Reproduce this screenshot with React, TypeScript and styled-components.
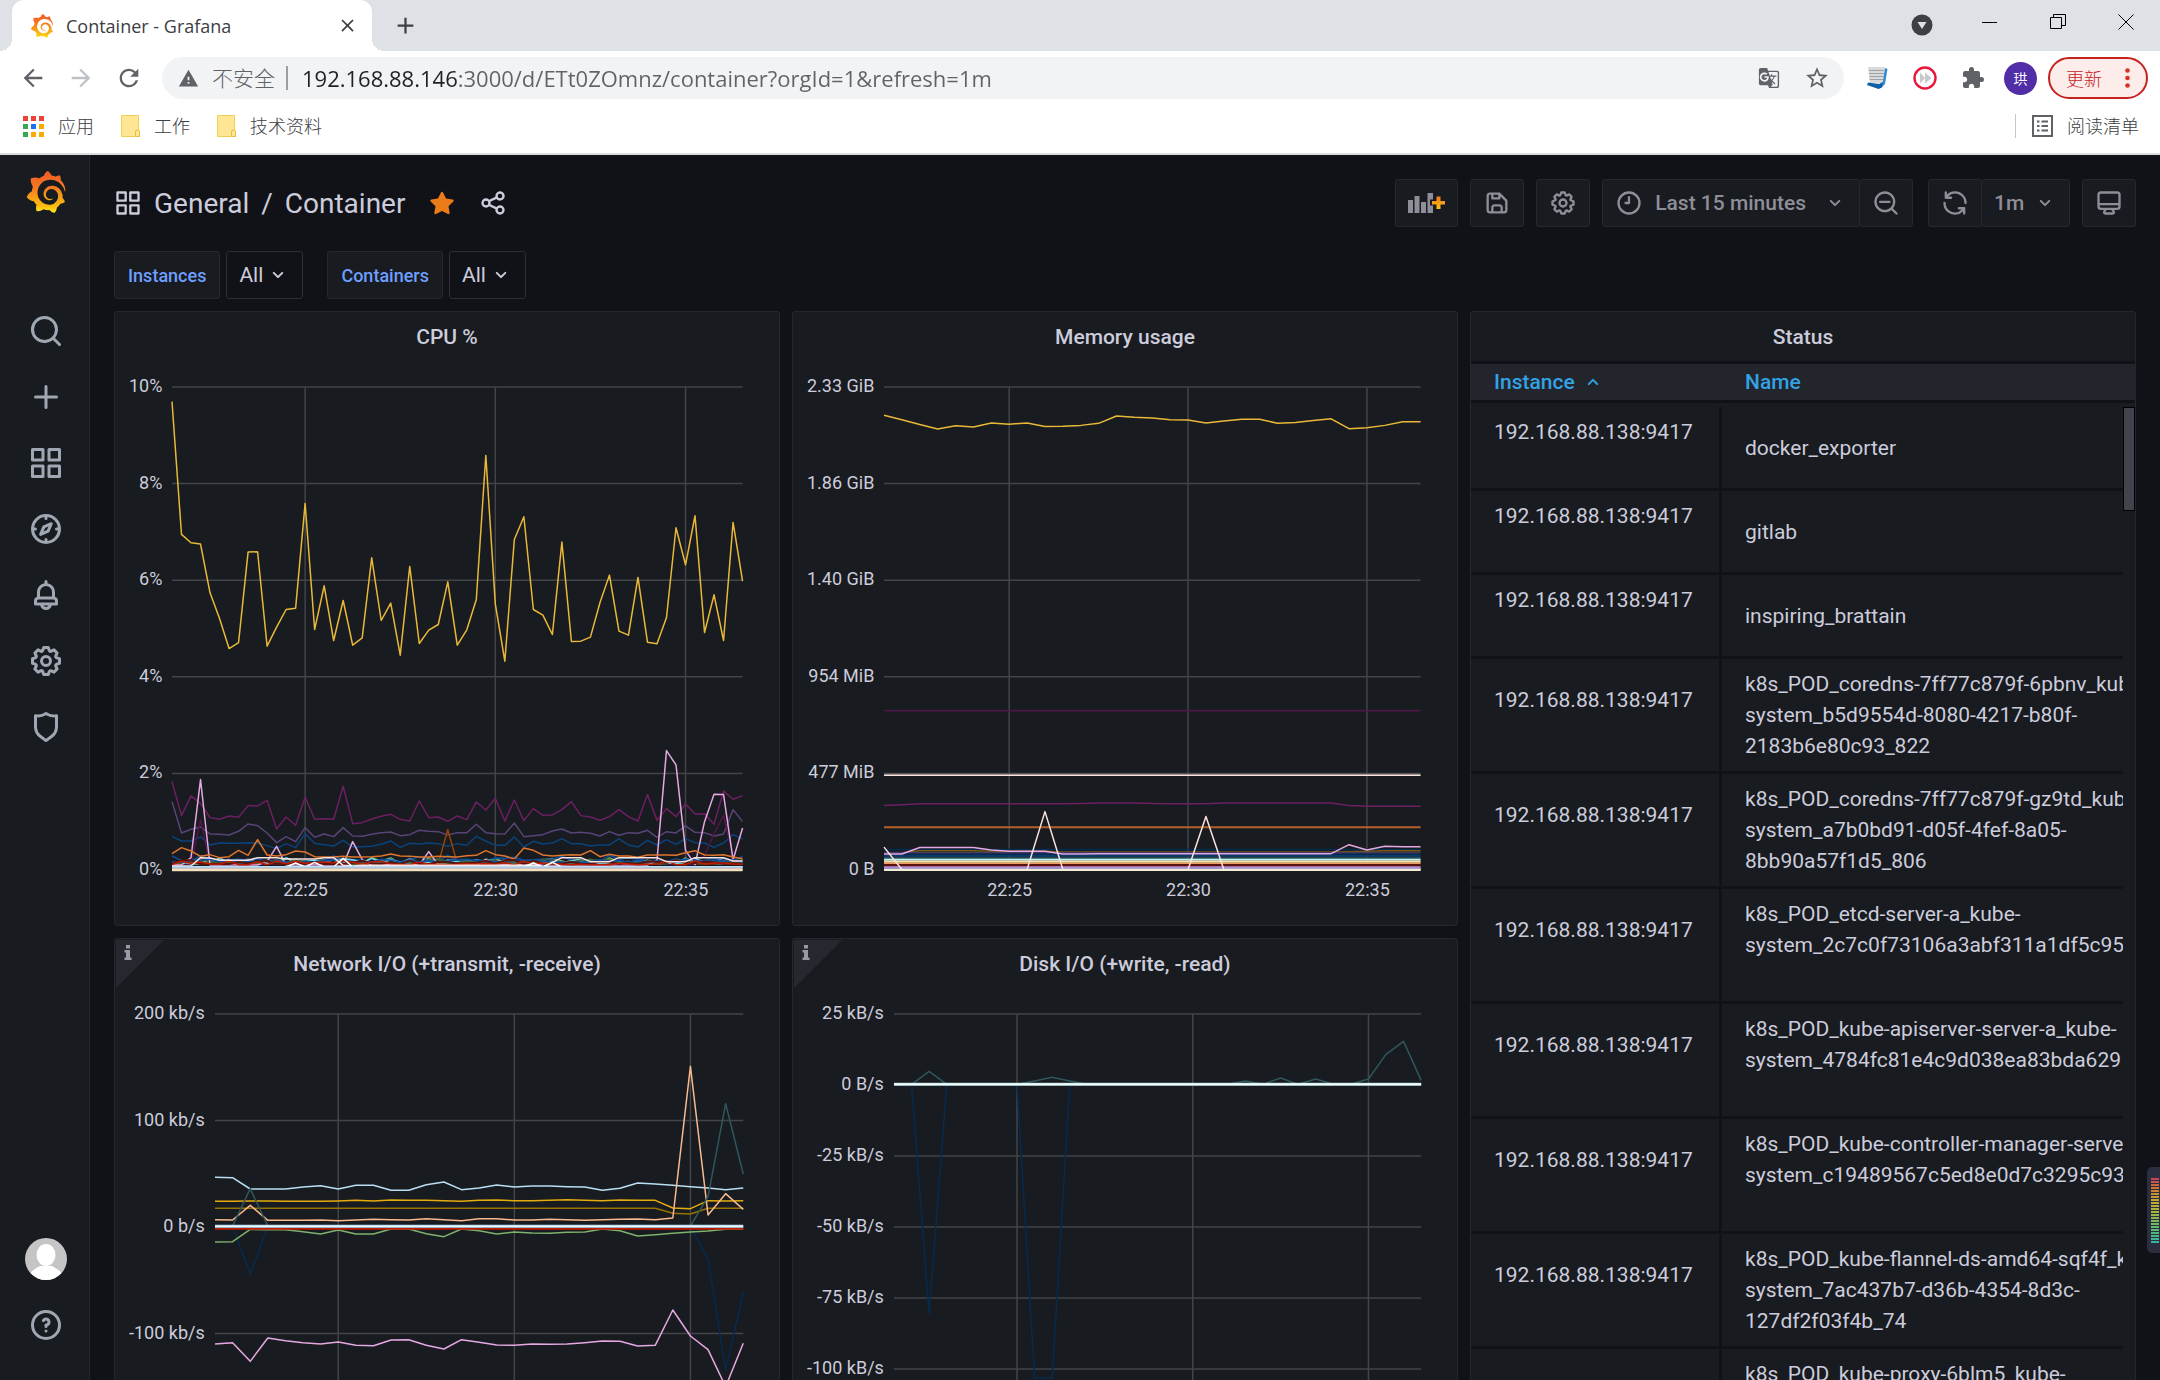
import React from 'react';
import styled, { createGlobalStyle } from 'styled-components';
import { SiGrafana } from 'react-icons/si';
import {
  MdArrowBack,
  MdArrowForward,
  MdRefresh,
  MdWarning,
  MdGTranslate,
  MdStarBorder,
  MdExtension,
  MdClose,
  MdAdd,
} from 'react-icons/md';

const GlobalStyle = createGlobalStyle`
  * { box-sizing: border-box; }
  body {
    margin: 0;
    background: #111217;
    color: #ccccdc;
    font-family: Roboto, "Noto Sans CJK SC", sans-serif;
    font-size: 21px;
  }
  button, input, select { font: inherit; color: inherit; margin: 0; }
  button { cursor: pointer; }
`;

/* ---------- icons ---------- */

const paths = {
  apps: 'M10,13H3a1,1,0,0,0-1,1v7a1,1,0,0,0,1,1h7a1,1,0,0,0,1-1V14A1,1,0,0,0,10,13ZM9,20H4V15H9ZM21,2H14a1,1,0,0,0-1,1v7a1,1,0,0,0,1,1h7a1,1,0,0,0,1-1V3A1,1,0,0,0,21,2ZM20,9H15V4h5Zm1,4H14a1,1,0,0,0-1,1v7a1,1,0,0,0,1,1h7a1,1,0,0,0,1-1V14A1,1,0,0,0,21,13Zm-1,7H15V15h5ZM10,2H3A1,1,0,0,0,2,3v7a1,1,0,0,0,1,1h7a1,1,0,0,0,1-1V3A1,1,0,0,0,10,2ZM9,9H4V4H9Z',
  search: 'M21.71,20.29,18,16.61A9,9,0,1,0,16.61,18l3.68,3.68a1,1,0,0,0,1.42,0A1,1,0,0,0,21.71,20.29ZM11,18a7,7,0,1,1,7-7A7,7,0,0,1,11,18Z',
  plus: 'M19,11H13V5a1,1,0,0,0-2,0v6H5a1,1,0,0,0,0,2h6v6a1,1,0,0,0,2,0V13h6a1,1,0,0,0,0-2Z',
  compass: 'M12,2A10,10,0,1,0,22,12,10,10,0,0,0,12,2Zm1,17.93V19a1,1,0,0,0-2,0v.93A8,8,0,0,1,4.07,13H5a1,1,0,0,0,0-2H4.07A8,8,0,0,1,11,4.07V5a1,1,0,0,0,2,0V4.07A8,8,0,0,1,19.93,11H19a1,1,0,0,0,0,2h.93A8,8,0,0,1,13,19.93ZM15.14,7.55l-5,2.12a1,1,0,0,0-.52.52l-2.12,5a1,1,0,0,0,.21,1.1,1,1,0,0,0,.7.3.93.93,0,0,0,.4-.09l5-2.12a1,1,0,0,0,.52-.52l2.12-5a1,1,0,0,0-1.31-1.31Zm-2.49,5.1-2.28,1,1-2.28,2.28-1Z',
  bell: 'M18,13.18V10a6,6,0,0,0-5-5.91V3a1,1,0,0,0-2,0V4.09A6,6,0,0,0,6,10v3.18A3,3,0,0,0,4,16v2a1,1,0,0,0,1,1H8.14a4,4,0,0,0,7.72,0H19a1,1,0,0,0,1-1V16A3,3,0,0,0,18,13.18ZM8,10a4,4,0,0,1,8,0v3H8Zm4,10a2,2,0,0,1-1.72-1h3.44A2,2,0,0,1,12,20Zm6-3H6V16a1,1,0,0,1,1-1H17a1,1,0,0,1,1,1Z',
  cog: 'M21.32,9.55l-1.89-.63.89-1.78A1,1,0,0,0,20.13,6L18,3.87a1,1,0,0,0-1.15-.19l-1.78.89-.63-1.89A1,1,0,0,0,13.5,2h-3a1,1,0,0,0-.95.68L8.92,4.57,7.14,3.68A1,1,0,0,0,6,3.87L3.87,6a1,1,0,0,0-.19,1.15l.89,1.78-1.89.63A1,1,0,0,0,2,10.5v3a1,1,0,0,0,.68.95l1.89.63-.89,1.78A1,1,0,0,0,3.87,18L6,20.13a1,1,0,0,0,1.15.19l1.78-.89.63,1.89a1,1,0,0,0,.95.68h3a1,1,0,0,0,.95-.68l.63-1.89,1.78.89A1,1,0,0,0,18,20.13L20.13,18a1,1,0,0,0,.19-1.15l-.89-1.78,1.89-.63A1,1,0,0,0,22,13.5v-3A1,1,0,0,0,21.32,9.55ZM20,12.78l-1.2.4A2,2,0,0,0,17.64,16l.57,1.14-1.1,1.1L16,17.64a2,2,0,0,0-2.79,1.16l-.4,1.2H11.22l-.4-1.2A2,2,0,0,0,8,17.64l-1.14.57-1.1-1.1L6.36,16A2,2,0,0,0,5.2,13.18L4,12.78V11.22l1.2-.4A2,2,0,0,0,6.36,8L5.79,6.89l1.1-1.1L8,6.36A2,2,0,0,0,10.82,5.2l.4-1.2h1.56l.4,1.2A2,2,0,0,0,16,6.36l1.14-.57,1.1,1.1L17.64,8a2,2,0,0,0,1.16,2.79l1.2.4ZM12,8a4,4,0,1,0,4,4A4,4,0,0,0,12,8Zm0,6a2,2,0,1,1,2-2A2,2,0,0,1,12,14Z',
  shield: 'M19.63,3.65a1,1,0,0,0-.84-.2,8,8,0,0,1-6.22-1.27,1,1,0,0,0-1.14,0A8,8,0,0,1,5.21,3.45a1,1,0,0,0-.84.2A1,1,0,0,0,4,4.43v7.45a9,9,0,0,0,3.77,7.33l3.65,2.6a1,1,0,0,0,1.16,0l3.65-2.6A9,9,0,0,0,20,11.88V4.43A1,1,0,0,0,19.63,3.65ZM18,11.88a7,7,0,0,1-2.93,5.7L12,19.77,8.93,17.58A7,7,0,0,1,6,11.88V5.58a10,10,0,0,0,6-1.39,10,10,0,0,0,6,1.39Z',
  help: 'M11.29,15.29a1.58,1.58,0,0,0-.12.15.76.76,0,0,0-.09.18.64.64,0,0,0-.06.18,1.36,1.36,0,0,0,0,.2.84.84,0,0,0,.08.38.9.9,0,0,0,.54.54.94.94,0,0,0,.76,0,.9.9,0,0,0,.54-.54A1,1,0,0,0,13,16a1,1,0,0,0-.29-.71A1,1,0,0,0,11.29,15.29ZM12,2A10,10,0,1,0,22,12,10,10,0,0,0,12,2Zm0,18a8,8,0,1,1,8-8A8,8,0,0,1,12,20ZM12,7A3,3,0,0,0,9.4,8.5a1,1,0,1,0,1.73,1A1,1,0,0,1,12,9a1,1,0,0,1,0,2,1,1,0,0,0-1,1v1a1,1,0,0,0,2,0v-.18A3,3,0,0,0,12,7Z',
  share: 'M18,14a4,4,0,0,0-3.08,1.48l-5.1-2.35a3.64,3.64,0,0,0,0-2.26l5.1-2.35A4,4,0,1,0,14,6a4.17,4.17,0,0,0,.07.71L8.79,9.14a4,4,0,1,0,0,5.72l5.28,2.43A4.17,4.17,0,0,0,14,18a4,4,0,1,0,4-4ZM18,4a2,2,0,1,1-2,2A2,2,0,0,1,18,4ZM6,14a2,2,0,1,1,2-2A2,2,0,0,1,6,14Zm12,6a2,2,0,1,1,2-2A2,2,0,0,1,18,20Z',
  star: 'M22,9.67A1,1,0,0,0,21.14,9l-5.69-.83L12.9,3a1,1,0,0,0-1.8,0L8.55,8.16,2.86,9a1,1,0,0,0-.81.68,1,1,0,0,0,.25,1l4.13,4-1,5.68A1,1,0,0,0,6.9,21.44L12,18.77l5.1,2.67a.93.93,0,0,0,.46.12,1,1,0,0,0,1-1.19l-1-5.68,4.13-4A1,1,0,0,0,22,9.67Z',
  save: 'M20.71,9.29l-6-6a1,1,0,0,0-.32-.21A1.09,1.09,0,0,0,14,3H6A3,3,0,0,0,3,6V18a3,3,0,0,0,3,3H18a3,3,0,0,0,3-3V10A1,1,0,0,0,20.71,9.29ZM9,5h4V7H9Zm6,14H9V16a1,1,0,0,1,1-1h4a1,1,0,0,1,1,1Zm4-1a1,1,0,0,1-1,1H17V16a3,3,0,0,0-3-3H10a3,3,0,0,0-3,3v3H6a1,1,0,0,1-1-1V6A1,1,0,0,1,6,5H7V8A1,1,0,0,0,8,9h6a1,1,0,0,0,1-1V6.41l4,4Z',
  clock: 'M12,2A10,10,0,1,0,22,12,10,10,0,0,0,12,2Zm0,18a8,8,0,1,1,8-8A8,8,0,0,1,12,20ZM12,6a1,1,0,0,0-1,1v4H9a1,1,0,0,0,0,2h3a1,1,0,0,0,1-1V7A1,1,0,0,0,12,6Z',
  zoomOut: 'M21.71,20.29,18,16.61A9,9,0,1,0,16.61,18l3.68,3.68a1,1,0,0,0,1.42,0A1,1,0,0,0,21.71,20.29ZM11,18a7,7,0,1,1,7-7A7,7,0,0,1,11,18Zm4-8H7a1,1,0,0,0,0,2h8a1,1,0,0,0,0-2Z',
  sync: 'M19.91,15.51H15.38a1,1,0,0,0,0,2h2.4A8,8,0,0,1,4,12a1,1,0,1,0-2,0,10,10,0,0,0,16.88,7.23V21a1,1,0,0,0,2,0V16.5A1,1,0,0,0,19.91,15.51ZM12,2A10,10,0,0,0,5.12,4.77V3a1,1,0,0,0-2,0V7.5a1,1,0,0,0,1,1h4.5a1,1,0,0,0,0-2H6.22A8,8,0,0,1,20,12a1,1,0,0,0,2,0A10,10,0,0,0,12,2Z',
  monitor: 'M19,2H5A3,3,0,0,0,2,5V15a3,3,0,0,0,3,3H7.64l-.58,1a2,2,0,0,0,0,2,2,2,0,0,0,1.75,1h6.46A2,2,0,0,0,17,21a2,2,0,0,0,0-2l-.59-1H19a3,3,0,0,0,3-3V5A3,3,0,0,0,19,2ZM8.77,20,10,18H14l1.2,2ZM20,15a1,1,0,0,1-1,1H5a1,1,0,0,1-1-1V14H20Zm0-3H4V5A1,1,0,0,1,5,4H19a1,1,0,0,1,1,1Z',
  down: 'M17,9.17a1,1,0,0,0-1.41,0L12,12.71,8.46,9.17a1,1,0,0,0-1.41,0,1,1,0,0,0,0,1.42l4.24,4.24a1,1,0,0,0,1.42,0L17,10.59A1,1,0,0,0,17,9.17Z',
  up: 'M17,13.41,12.71,9.17a1,1,0,0,0-1.42,0L7.05,13.41a1,1,0,0,0,0,1.42,1,1,0,0,0,1.41,0L12,11.29l3.54,3.54a1,1,0,0,0,.7.29,1,1,0,0,0,.71-.29A1,1,0,0,0,17,13.41Z',
};

const IconSvg = styled.svg`
  display: block;
  flex: none;
  fill: currentColor;
`;

function Icon({ name, size = 28 }: { name: keyof typeof paths; size?: number }) {
  return (
    <IconSvg width={size} height={size} viewBox="0 0 24 24" aria-hidden="true">
      <path d={paths[name]} />
    </IconSvg>
  );
}

/* ---------- browser chrome ---------- */

const Window = styled.div`
  display: flex;
  flex-direction: column;
  height: 100vh;
  overflow: hidden;
  position: relative;
`;

const Chrome = styled.header`
  flex: none;
  background: #fff;
  color: #3c4043;
  font-family: "Open Sans", "Noto Sans CJK SC", sans-serif;
  font-size: 18px;
  border-bottom: 2px solid #dadce0;
`;

const TabStrip = styled.div`
  display: flex;
  align-items: stretch;
  height: 51px;
  padding-left: 12px;
  background: #dee1e6;
`;

const Tab = styled.div`
  position: relative;
  display: flex;
  align-items: center;
  gap: 12px;
  width: 360px;
  padding: 0 14px 0 18px;
  background: #fff;
  border-radius: 12px 12px 0 0;
  &::before, &::after {
    content: "";
    position: absolute;
    bottom: 0;
    width: 12px;
    height: 12px;
  }
  &::before { right: 100%; background: radial-gradient(circle at 0 0, transparent 12px, #fff 12px); }
  &::after { left: 100%; background: radial-gradient(circle at 100% 0, transparent 12px, #fff 12px); }
`;

const TabTitle = styled.span`
  flex: 1;
  white-space: nowrap;
`;

const PlainButton = styled.button`
  display: flex;
  align-items: center;
  justify-content: center;
  padding: 0;
  border: 0;
  background: none;
`;

const NewTab = styled(PlainButton)`
  width: 66px;
`;

const WindowControls = styled.div`
  display: flex;
  align-items: flex-start;
  margin-left: auto;
`;

const WindowButton = styled(PlainButton)<{ $tall?: boolean }>`
  width: 68px;
  height: ${(p) => (p.$tall ? 50 : 43)}px;
`;

const AddressRow = styled.div`
  display: flex;
  align-items: center;
  height: 54px;
  padding: 0 12px 0 9px;
  color: #5f6368;
`;

const NavButton = styled(PlainButton)<{ $dim?: boolean }>`
  width: 48px;
  height: 42px;
  color: ${(p) => (p.$dim ? '#bdc1c6' : '#5f6368')};
`;

const Omnibox = styled.div`
  display: flex;
  align-items: center;
  flex: 1;
  height: 42px;
  margin: 0 9px;
  padding: 0 3px 0 16px;
  border-radius: 21px;
  background: #f1f3f4;
`;

const Insecure = styled.label`
  display: flex;
  align-items: center;
  gap: 13px;
  padding-right: 11px;
  margin-right: 14px;
  border-right: 2px solid #9aa0a6;
  font-size: 21px;
  font-weight: 300;
  line-height: 24px;
  white-space: nowrap;
`;

const Url = styled.input`
  flex: 1;
  min-width: 0;
  padding: 0;
  border: 0;
  outline: 0;
  font-size: 22px;
  color: #5f6368;
  background: linear-gradient(90deg, #202124 157px, #5f6368 157px);
  -webkit-background-clip: text;
  background-clip: text;
  -webkit-text-fill-color: transparent;
`;

const Avatar = styled(PlainButton)`
  width: 33px;
  height: 33px;
  margin: 0 11px 0 7px;
  border-radius: 50%;
  background: #512da8;
  color: #fff;
  font-size: 14px;
`;

const UpdateButton = styled.button`
  display: flex;
  align-items: center;
  justify-content: space-between;
  width: 100px;
  height: 42px;
  padding: 0 16px;
  border: 2px solid #c5221f;
  border-radius: 21px;
  background: #fcecea;
  color: #c5221f;
  font-weight: 300;
`;

const Bookmarks = styled.nav`
  display: flex;
  align-items: center;
  height: 48px;
  padding: 0 21px 6px 23px;
  gap: 27px;
  font-weight: 300;
`;

const Bookmark = styled.a<{ $end?: boolean }>`
  display: flex;
  align-items: center;
  gap: 14px;
  color: inherit;
  text-decoration: none;
  white-space: nowrap;
  line-height: 24px;
  ${(p) => p.$end && 'margin-left: auto; padding-left: 16px; border-left: 1px solid #c4c7cb;'}
`;

/* ---------- Grafana shell ---------- */

const Shell = styled.div`
  display: flex;
  flex: 1;
  min-height: 0;
`;

const Sidebar = styled.nav`
  display: flex;
  flex-direction: column;
  align-items: center;
  flex: none;
  width: 90px;
  padding: 16px 0 0 2px;
  background: #181b1f;
  border-right: 1px solid #24272c;
  color: #9fa7b3;
`;

const SideLink = styled.a`
  display: flex;
  align-items: center;
  justify-content: center;
  width: 66px;
  height: 66px;
  color: inherit;
`;

const SideGroup = styled.div<{ $end?: boolean }>`
  display: flex;
  flex-direction: column;
  margin-top: ${(p) => (p.$end ? 'auto' : '80px')};
  padding-bottom: ${(p) => (p.$end ? '22px' : '0')};
`;

const Main = styled.main`
  flex: 1;
  min-width: 0;
  padding: 24px 24px 0;
  overflow: hidden;
`;

const Toolbar = styled.div`
  display: flex;
  align-items: center;
  gap: 12px;
  height: 48px;
`;

const Title = styled.h1`
  display: flex;
  align-items: center;
  gap: 12px;
  margin: 0 auto 0 0;
  font-size: 28px;
  font-weight: 400;
  white-space: nowrap;
`;

const TitleButton = styled(PlainButton)`
  margin-left: 11px;
  color: inherit;
`;

const StarButton = styled(TitleButton)`
  color: #eb7b18;
`;

const Crumb = styled.a`
  color: inherit;
  text-decoration: none;
`;

const ToolButton = styled.button`
  display: flex;
  align-items: center;
  justify-content: center;
  gap: 12px;
  height: 48px;
  padding: 0 12px;
  background: #181b1f;
  border: 1px solid #25282d;
  border-radius: 3px;
  color: #8e8e99;
  font-weight: 500;
  white-space: nowrap;
`;

const RangeText = styled.span`
  padding-right: 5px;
`;

const Group = styled.div`
  display: flex;
  & > * + * { margin-left: -1px; }
  & + & { margin-left: 3px; }
`;

const SelectBox = styled.span<{ $tone?: 'tool' | 'field' }>`
  display: flex;
  align-items: center;
  height: 48px;
  padding: 0 12px;
  border: 1px solid #2c2e34;
  border-radius: 3px;
  ${(p) =>
    p.$tone === 'tool'
      ? 'background: #181b1f; border-color: #25282d; color: #8e8e99; font-weight: 500; gap: 8px;'
      : 'background: #111217; color: #ccccdc; gap: 3px;'}
  select {
    appearance: none;
    padding: 0;
    border: 0;
    outline: 0;
    background: none;
  }
`;

const Filters = styled.div`
  display: flex;
  gap: 24px;
  margin: 24px 0 12px;
`;

const Filter = styled.div`
  display: flex;
  gap: 6px;
`;

const FilterLabel = styled.label`
  display: flex;
  align-items: center;
  height: 48px;
  padding: 0 13px;
  background: #181b1f;
  border: 1px solid #25282d;
  border-radius: 3px;
  color: #6e9fff;
  font-size: 18px;
  font-weight: 500;
`;

/* ---------- panels ---------- */

const Dashboard = styled.div`
  display: grid;
  grid-template-columns: repeat(3, minmax(0, 1fr));
  grid-auto-rows: 615px;
  gap: 12px;
`;

const Panel = styled.section<{ $rows?: number }>`
  position: relative;
  display: flex;
  flex-direction: column;
  grid-row: span ${(p) => p.$rows ?? 1};
  background: #181b1f;
  border: 1px solid #24272c;
  border-radius: 3px;
  overflow: hidden;
`;

const PanelTitle = styled.h2`
  flex: none;
  margin: 0;
  height: 49px;
  font-size: 21px;
  font-weight: 500;
  line-height: 50px;
  text-align: center;
`;

const InfoCorner = styled.svg`
  position: absolute;
  top: 1px;
  left: 1px;
`;

const Chart = styled.div`
  display: grid;
  grid-template-columns: auto minmax(0, 1fr);
  column-gap: 10px;
  padding: 26px 36px 0 14px;
  font-size: 18px;
  line-height: 22px;
`;

const YAxis = styled.div`
  display: flex;
  flex-direction: column;
  justify-content: space-between;
  margin: -12px 0 -10px;
  text-align: right;
  white-space: nowrap;
`;

const Plot = styled.svg<{ $height: number }>`
  display: block;
  width: 100%;
  height: ${(p) => p.$height}px;
  overflow: visible;
  fill: none;
  path, line { vector-effect: non-scaling-stroke; }
`;

const XAxis = styled.div`
  display: flex;
  grid-column: 2;
  padding: 9px 0 0 6.667%;
  span { flex: 0 0 35.714%; text-align: center; }
`;

type Series = { color: string; values: number[]; width?: number };

type ChartProps = {
  ticks: string[];
  series: Series[];
  height: number;
  /** raw value drawn at the first and at the last tick */
  range: [number, number];
  points: number;
};

function TimeChart({ ticks, series, height, range, points }: ChartProps) {
  const [top, bottom] = range;
  const last = points - 1;
  const step = (bottom - top) / (ticks.length - 1);
  return (
    <Chart>
      <YAxis>
        {ticks.map((t) => (
          <span key={t}>{t}</span>
        ))}
      </YAxis>
      <Plot
        $height={height}
        viewBox={`0 ${top} ${last} ${bottom - top}`}
        preserveAspectRatio="none"
        role="img"
      >
        <g stroke="#424448" strokeWidth={1.5}>
          {ticks.map((t, i) => (
            <line key={t} x1={0} x2={last} y1={top + i * step} y2={top + i * step} />
          ))}
          {[7, 17, 27].map((x) => (
            <line key={x} x1={(x / 30) * last} x2={(x / 30) * last} y1={top} y2={bottom} />
          ))}
        </g>
        {series.map((s, i) => {
          const dx = last / (s.values.length - 1);
          return (
            <path
              key={i}
              stroke={s.color}
              strokeWidth={s.width ?? 1.5}
              strokeLinejoin="round"
              d={'M' + s.values.map((v, k) => `${(k * dx).toFixed(2)},${v}`).join('L')}
            />
          );
        })}
      </Plot>
      <XAxis>
        <span>22:25</span>
        <span>22:30</span>
        <span>22:35</span>
      </XAxis>
    </Chart>
  );
}

/* ---------- series data ---------- */

const flat = (v: number): number[] => [v, v];

/** A level line with single samples replaced. */
const spikes = (n: number, base: number, at: Record<number, number>): number[] =>
  Array.from({ length: n }, (_, i) => at[i] ?? base);

/** A low, slightly restless line near the bottom of the chart. */
const jitter = (seed: number, base: number, spread: number): number[] =>
  Array.from({ length: 61 }, (_, i) => {
    const r = Math.abs(Math.sin((i + 1) * 12.9898 + seed * 78.233) * 43758.5453) % 1;
    return Math.round(base - spread * r * r);
  });

const low = (values: number[]): number[] => values.map((v) => v + 1200);

const cpuSeries: Series[] = [
  {
    color: '#eab839',
    values: [305, 703, 728, 732, 878, 955, 1045, 1027, 756, 755, 1038, 981, 928, 924, 610, 988, 857, 1021, 901, 1035, 1013, 773, 961, 909, 1065, 799, 1030, 990, 973, 845, 1035, 989, 898, 466, 912, 1083, 718, 650, 928, 945, 1003, 726, 1024, 1023, 1011, 908, 825, 993, 1005, 832, 1026, 1031, 952, 683, 794, 647, 997, 884, 1021, 667, 843],
  },
  {
    color: '#6d1f62',
    values: low([244, 346, 287, 310, 352, 357, 347, 351, 316, 317, 300, 386, 350, 375, 290, 357, 355, 357, 258, 370, 367, 356, 348, 342, 357, 362, 302, 352, 350, 363, 347, 358, 305, 329, 294, 362, 299, 361, 325, 345, 344, 328, 304, 346, 350, 360, 349, 328, 349, 362, 283, 360, 325, 349, 311, 341, 340, 372, 272, 297, 286]),
  },
  {
    color: '#584477',
    values: low([304, 398, 387, 380, 401, 402, 404, 393, 371, 376, 398, 427, 409, 424, 382, 411, 401, 409, 382, 407, 408, 402, 397, 395, 406, 403, 390, 393, 394, 404, 397, 397, 372, 397, 400, 401, 368, 409, 406, 403, 392, 386, 398, 396, 399, 407, 394, 405, 397, 399, 390, 411, 394, 398, 377, 396, 397, 407, 401, 328, 364]),
  },
  {
    color: '#0a437c',
    values: low([408, 422, 422, 409, 434, 428, 429, 429, 427, 428, 436, 445, 430, 442, 400, 429, 433, 437, 420, 440, 439, 438, 432, 422, 441, 429, 431, 428, 430, 438, 430, 435, 408, 422, 435, 435, 410, 440, 423, 431, 428, 415, 430, 430, 437, 434, 434, 416, 434, 440, 420, 434, 418, 432, 415, 427, 428, 441, 428, 403, 416]),
  },
  { color: '#99440a', values: low(spikes(61, 490, { 29: 388 })) },
  { color: '#511749', values: low(spikes(61, 492, { 3: 358, 56: 466, 57: 400, 58: 345, 59: 470 })) },
  { color: '#7eb26d', values: low(jitter(1, 490, 20)) },
  { color: '#0a50a1', values: low(jitter(2, 484, 20)) },
  { color: '#447ebc', values: low(jitter(3, 488, 14)) },
  { color: '#70dbed', values: low(jitter(4, 490, 18)) },
  { color: '#2f575e', values: low(jitter(5, 488, 12)) },
  { color: '#3f6833', values: low(jitter(9, 490, 14)) },
  {
    color: '#e5a8e2',
    values: low(spikes(61, 494, { 2: 472, 3: 238, 10: 484, 11: 438, 12: 494, 19: 424, 20: 478, 27: 454, 33: 478, 51: 480, 52: 151, 53: 194, 54: 450, 55: 493, 56: 364, 57: 282, 58: 283, 59: 478, 60: 383 })),
  },
  {
    color: '#e0752d',
    values: low([460, 442, 452, 468, 463, 472, 469, 450, 465, 418, 464, 467, 463, 452, 455, 469, 470, 470, 468, 470, 470, 469, 467, 461, 467, 468, 470, 470, 468, 469, 470, 466, 465, 451, 463, 467, 476, 443, 450, 464, 467, 465, 463, 464, 451, 469, 462, 467, 467, 471, 464, 464, 464, 465, 457, 451, 464, 465, 463, 470, 475]),
  },
  { color: '#0a50a1', values: low(jitter(11, 486, 10)) },
  { color: '#58140c', values: low(jitter(6, 491, 12)), width: 2 },
  { color: '#bf1b00', values: low(jitter(7, 493, 12)) },
  {
    color: '#fce2de',
    values: low([497, 497, 497, 472, 473, 480, 480, 480, 480, 472, 472, 472, 476, 476, 476, 476, 472, 472, 495, 497, 495, 495, 495, 495, 495, 495, 495, 495, 495, 495, 495, 495, 495, 495, 495, 495, 495, 495, 495, 500, 486, 472, 472, 472, 484, 484, 484, 472, 472, 472, 472, 472, 484, 484, 484, 472, 472, 472, 472, 482, 482]),
  },
  { color: '#ffffff', values: low(spikes(61, 500, { 13: 488, 15: 486, 18: 474, 38: 488, 40: 486 })) },
  { color: '#badff4', values: low(flat(500)), width: 2 },
  { color: '#6d6475', values: low(flat(504)), width: 1 },
  { color: '#fce2de', values: low(flat(507)), width: 2 },
  { color: '#f2e0b8', values: low(flat(510)), width: 2 },
];

const memorySeries: Series[] = [
  {
    color: '#eab839',
    values: [282, 293, 305, 316, 308, 311, 301, 304, 301, 310, 309, 307, 302, 284, 287, 289, 293, 294, 301, 296, 292, 292, 302, 300, 295, 291, 315, 313, 307, 298, 298],
  },
  { color: '#511749', values: flat(1006) },
  { color: '#6d6566', values: flat(1161), width: 1 },
  { color: '#fce2de', values: flat(1164) },
  {
    color: '#6d1f62',
    values: [1238, 1236, 1234, 1234, 1234, 1234, 1234, 1234, 1234, 1234, 1234, 1233, 1232, 1232, 1232, 1233, 1234, 1234, 1234, 1232, 1232, 1232, 1232, 1232, 1232, 1232, 1238, 1240, 1240, 1240, 1240],
  },
  { color: '#b5602b', values: flat(1291), width: 2 },
  { color: '#052b51', values: flat(1346) },
  { color: '#7a5f08', values: [1356, 1354, 1349, 1349, 1349, 1349, 1350, 1350, 1350, 1350, 1352, 1352, 1352, 1352, 1352, 1352, 1352, 1352, 1352, 1352, 1352, 1352, 1352, 1352, 1352, 1352, 1351, 1350, 1349, 1349, 1349] },
  { color: '#443a64', values: flat(1354), width: 2 },
  { color: '#052b51', values: flat(1358), width: 2 },
  { color: '#0a437c', values: flat(1362) },
  { color: '#2f575e', values: flat(1367), width: 2 },
  {
    color: '#e5a8e2',
    values: [1357, 1357, 1341, 1341, 1341, 1341, 1347, 1350, 1350, 1350, 1357, 1357, 1356, 1356, 1356, 1356, 1356, 1356, 1356, 1356, 1356, 1356, 1356, 1356, 1356, 1356, 1334, 1347, 1338, 1339, 1339],
  },
  { color: '#c5f2f2', values: flat(1371), width: 2 },
  { color: '#f9e2a8', values: flat(1376), width: 2 },
  { color: '#f29b5e', values: flat(1380) },
  { color: '#58140c', values: flat(1384), width: 2 },
  { color: '#d683ce', values: flat(1389), width: 2 },
  { color: '#8f96cf', values: flat(1392) },
  { color: '#fce2de', values: spikes(31, 1395, { 0: 1340, 9: 1253, 18: 1265 }) },
  { color: '#f6ecd2', values: flat(1396), width: 2 },
];

const networkSeries: Series[] = [
  { color: '#052b51', values: spikes(31, 890, { 2: 1032, 28: 988, 29: 1320, 30: 1088 }) },
  {
    color: '#badff4',
    values: [742, 743, 777, 777, 777, 771, 767, 777, 766, 766, 781, 781, 764, 756, 779, 774, 765, 771, 768, 768, 770, 771, 781, 775, 759, 762, 766, 770, 774, 779, 774],
  },
  { color: '#e5ac0e', values: [814, 814, 813, 813, 814, 814, 814, 813, 811, 813, 810, 811, 811, 812, 814, 811, 810, 812, 812, 811, 809, 811, 812, 810, 811, 811, 834, 836, 812, 813, 812] },
  { color: '#967302', values: spikes(31, 835, { 26: 850, 27: 852 }) },
  {
    color: '#f9ba8f',
    values: [869, 870, 826, 871, 871, 871, 870, 872, 870, 868, 869, 870, 866, 869, 872, 866, 866, 870, 870, 868, 869, 871, 869, 868, 867, 869, 864, 409, 855, 791, 838],
  },
  { color: '#2f575e', values: spikes(31, 888, { 2: 776, 28: 800, 29: 521, 30: 732 }) },
  {
    color: '#7eb26d',
    values: [936, 935, 898, 899, 899, 905, 912, 900, 912, 912, 897, 897, 911, 920, 897, 902, 912, 906, 909, 910, 907, 906, 897, 902, 918, 914, 910, 906, 903, 898, 897],
  },
  {
    color: '#e5a8e2',
    values: [1242, 1238, 1294, 1224, 1232, 1238, 1242, 1236, 1246, 1247, 1230, 1229, 1246, 1257, 1229, 1237, 1245, 1246, 1242, 1243, 1242, 1238, 1233, 1234, 1248, 1246, 1140, 1218, 1259, 1370, 1240],
  },
  { color: '#bf1b00', values: flat(896), width: 2 },
  { color: '#badff4', values: flat(889), width: 3 },
  { color: '#f4ffff', values: flat(889), width: 1 },
];

const diskSeries: Series[] = [
  { color: '#052b51', values: spikes(31, 463, { 2: 1150, 8: 1344, 9: 1344 }) },
  {
    color: '#2f575e',
    values: spikes(31, 463, { 2: 424, 8: 453, 9: 442, 10: 453, 20: 453, 22: 444, 24: 447, 27: 447, 28: 373, 29: 334, 30: 451 }),
  },
  { color: '#9cc9cf', values: flat(463), width: 3 },
  { color: '#f4ffff', values: flat(463), width: 2 },
];

/* ---------- status table ---------- */

const Table = styled.table`
  width: 100%;
  table-layout: fixed;
  border-collapse: separate;
  border-spacing: 0;
`;

const HeadCell = styled.th<{ $first?: boolean }>`
  width: ${(p) => (p.$first ? '251px' : 'auto')};
  height: 42px;
  padding: 0 23px;
  border: solid #111217;
  border-width: 3px 0;
  background: #22252b;
  color: #33a2e5;
  font-weight: 500;
  text-align: left;
`;

const SortLabel = styled.span`
  display: flex;
  align-items: center;
  gap: 6px;
`;

const TableBody = styled.div`
  position: relative;
  display: flex;
  align-items: flex-start;
  flex: 1;
  min-height: 0;
  padding: 4px 12px 0 0;
  overflow: hidden;
`;

const Cell = styled.td<{ $first?: boolean; $tall?: boolean }>`
  width: ${(p) => (p.$first ? '251px' : 'auto')};
  height: ${(p) => (p.$tall ? 115 : 84)}px;
  padding: ${(p) => (Boolean(p.$first) === Boolean(p.$tall) ? '26px' : '10px')} 0 0 23px;
  border-bottom: 3px solid #111217;
  border-right: ${(p) => (p.$first ? '3px solid #111217' : '0')};
  line-height: 31px;
  vertical-align: top;
  white-space: pre;
  overflow: hidden;
`;

const ScrollThumb = styled.div`
  position: absolute;
  top: 4px;
  right: 0;
  width: 12px;
  height: 104px;
  background: #42434c;
  border: 1px solid #000;
`;

const containers: string[] = [
  'docker_exporter',
  'gitlab',
  'inspiring_brattain',
  'k8s_POD_coredns-7ff77c879f-6pbnv_kube-\nsystem_b5d9554d-8080-4217-b80f-\n2183b6e80c93_822',
  'k8s_POD_coredns-7ff77c879f-gz9td_kube-\nsystem_a7b0bd91-d05f-4fef-8a05-\n8bb90a57f1d5_806',
  'k8s_POD_etcd-server-a_kube-\nsystem_2c7c0f73106a3abf311a1df5c95',
  'k8s_POD_kube-apiserver-server-a_kube-\nsystem_4784fc81e4c9d038ea83bda629',
  'k8s_POD_kube-controller-manager-server\nsystem_c19489567c5ed8e0d7c3295c93',
  'k8s_POD_kube-flannel-ds-amd64-sqf4f_kube-\nsystem_7ac437b7-d36b-4354-8d3c-\n127df2f03f4b_74',
  'k8s_POD_kube-proxy-6blm5_kube-\nsystem',
];

function StatusTable() {
  return (
    <>
      <Table>
        <thead>
          <tr>
            <HeadCell $first><SortLabel>Instance <Icon name="up" size={24} /></SortLabel></HeadCell>
            <HeadCell>Name</HeadCell>
          </tr>
        </thead>
      </Table>
      <TableBody>
        <Table>
          <tbody>
            {containers.map((name) => {
              const tall = name.includes('\n');
              return (
                <tr key={name}>
                  <Cell $first $tall={tall}>192.168.88.138:9417</Cell>
                  <Cell $tall={tall}>{name}</Cell>
                </tr>
              );
            })}
          </tbody>
        </Table>
        <ScrollThumb />
      </TableBody>
    </>
  );
}

/* ---------- floating meter at the window edge ---------- */

const Meter = styled.div`
  position: absolute;
  right: 0;
  top: 1167px;
  width: 13px;
  height: 86px;
  padding: 11px 1px 9px 4px;
  border-radius: 5px 0 0 5px;
  background: #2b2e3f;
`;

const MeterScale = styled.div`
  height: 66px;
  background:
    repeating-linear-gradient(180deg, transparent 0 2px, #2b2e3f 2px 3px),
    linear-gradient(180deg, #c8405f, #d0722f 14%, #c4a52e 32%, #a9b83a 50%, #63b867 74%, #2fb5a5);
`;

const bookmarkTiles = ['#ea4335', '#ea4335', '#ea4335', '#34a853', '#1a73e8', '#f9ab00', '#34a853', '#f9ab00', '#f9ab00'];

function Folder() {
  return (
    <svg width="19" height="22" viewBox="0 0 19 22" aria-hidden="true">
      <path d="M.5.5h17v15l1 1v5H.5z" fill="#ffe694" stroke="#f0cf52" />
      <path d="M14.500 21.500v-4.500a2 2 0 0 1 4 0v4.500z" fill="#ffe694" stroke="#e3bd3c" />
    </svg>
  );
}

const GradientDefs = styled.svg`
  position: absolute;
`;

function GrafanaMark({ size, id }: { size: number; id: string }) {
  return (
    <>
      <GradientDefs width="0" height="0" aria-hidden="true">
        <linearGradient id={id} x1="0" y1="1" x2="0" y2="0">
          <stop offset="0" stopColor="#fcee1f" />
          <stop offset="0.15" stopColor="#fcc010" />
          <stop offset="0.6" stopColor="#f47a20" />
          <stop offset="1" stopColor="#f05a28" />
        </linearGradient>
      </GradientDefs>
      <SiGrafana size={size} fill={`url(#${id})`} />
    </>
  );
}

function ChartPanel({ title, info, ...chart }: ChartProps & { title: string; info?: boolean }) {
  return (
    <Panel>
      {info && (
        <InfoCorner width="48" height="48" viewBox="0 0 48 48" aria-hidden="true">
          <path d="M0 0h48L0 48z" fill="#25282f" />
          <path d="M10 5h4v3.500h-4zM8.500 10H14v7.500h1.500V20h-7v-2.500H10v-5H8.500z" fill="#9a9aa6" />
        </InfoCorner>
      )}
      <PanelTitle>{title}</PanelTitle>
      <TimeChart {...chart} />
    </Panel>
  );
}

const sideLinks: { name: keyof typeof paths; label: string }[] = [
  { name: 'search', label: 'Search dashboards' },
  { name: 'plus', label: 'Create' },
  { name: 'apps', label: 'Dashboards' },
  { name: 'compass', label: 'Explore' },
  { name: 'bell', label: 'Alerting' },
  { name: 'cog', label: 'Configuration' },
  { name: 'shield', label: 'Server Admin' },
];

export default function App() {
  return (
    <Window>
      <GlobalStyle />
      <Chrome>
        <TabStrip>
          <Tab>
            <GrafanaMark size={24} id="mark-tab" />
            <TabTitle>Container - Grafana</TabTitle>
            <PlainButton aria-label="Close tab"><MdClose size={21} /></PlainButton>
          </Tab>
          <NewTab aria-label="New tab"><MdAdd size={27} /></NewTab>
          <WindowControls>
            <WindowButton $tall aria-label="Search tabs">
              <svg width="22" height="22" viewBox="0 0 22 22"><circle cx="11" cy="11" r="10.500" fill="#3c4043" /><path d="M6.500 8h9L11 15z" fill="#dee1e6" /></svg>
            </WindowButton>
            <WindowButton aria-label="Minimize">
              <svg width="16" height="16" viewBox="0 0 16 16"><path d="M0 8.500h15" stroke="#000" /></svg>
            </WindowButton>
            <WindowButton aria-label="Restore">
              <svg width="16" height="16" viewBox="0 0 16 16" fill="none" stroke="#000"><path d="M.5 3.500h11v11H.5zM3.500 3.500v-3h12v11h-4" /></svg>
            </WindowButton>
            <WindowButton aria-label="Close">
              <svg width="16" height="16" viewBox="0 0 16 16" stroke="#000"><path d="M.5.5l15 15M15.500.5l-15 15" /></svg>
            </WindowButton>
          </WindowControls>
        </TabStrip>
        <AddressRow>
          <NavButton aria-label="Back"><MdArrowBack size={28} /></NavButton>
          <NavButton $dim aria-label="Forward"><MdArrowForward size={28} /></NavButton>
          <NavButton aria-label="Reload"><MdRefresh size={28} /></NavButton>
          <Omnibox>
            <Insecure htmlFor="address"><MdWarning size={21} />不安全</Insecure>
            <Url id="address" defaultValue="192.168.88.146:3000/d/ETt0ZOmnz/container?orgId=1&refresh=1m" />
            <NavButton aria-label="Translate"><MdGTranslate size={22} /></NavButton>
            <NavButton aria-label="Bookmark"><MdStarBorder size={26} /></NavButton>
          </Omnibox>
          <NavButton aria-label="Reader extension">
            <svg width="24" height="24" viewBox="0 0 24 24">
              <path d="M3 1h17l-2 16H5z" fill="#d9dadb" />
              <path d="M4 4.500h15M4 7.500h15M4.500 10.500h14M4.500 13.500h14" stroke="#9da2a6" strokeWidth="1.200" />
              <path d="M3 16.500l11 1.500 4-2 1 1-2 4.500-3.500 1.500L2 19z" fill="#0f5ea8" />
              <path d="M20 2l2.500 1-2.500 15-3 3 1-6z" fill="#2b8bd6" />
            </svg>
          </NavButton>
          <NavButton aria-label="Video extension">
            <svg width="24" height="24" viewBox="0 0 24 24">
              <circle cx="12" cy="12" r="10.500" fill="#fff" stroke="#e8173b" strokeWidth="2.400" />
              <path d="M7 6.500l5 5.500-5 5.500zM12 6.500l6.500 5.500-6.500 5.500z" fill="#c9c9cc" />
            </svg>
          </NavButton>
          <NavButton aria-label="Extensions"><MdExtension size={24} /></NavButton>
          <Avatar aria-label="Profile">珙</Avatar>
          <UpdateButton>
            更新
            <svg width="5" height="20" viewBox="0 0 5 20" fill="#d93025"><circle cx="2.500" cy="2.500" r="2.300" /><circle cx="2.500" cy="10" r="2.300" /><circle cx="2.500" cy="17.500" r="2.300" /></svg>
          </UpdateButton>
        </AddressRow>
        <Bookmarks>
          <Bookmark href="#apps">
            <svg width="21" height="21" viewBox="0 0 21 21" aria-hidden="true">
              {bookmarkTiles.map((c, i) => (
                <rect key={i} x={(i % 3) * 8} y={Math.floor(i / 3) * 8} width="5" height="5" fill={c} />
              ))}
            </svg>
            应用
          </Bookmark>
          <Bookmark href="#work"><Folder />工作</Bookmark>
          <Bookmark href="#tech"><Folder />技术资料</Bookmark>
          <Bookmark href="#reading" $end>
            <svg width="21" height="22" viewBox="0 0 21 22" fill="none" stroke="#5f6368" strokeWidth="2" aria-hidden="true">
              <path d="M1 1h19v20H1zM5 6.500h2.500M9.500 6.500H16M5 11h2.500M9.500 11H16M5 15.500h2.500M9.500 15.500H16" />
            </svg>
            阅读清单
          </Bookmark>
        </Bookmarks>
      </Chrome>

      <Shell>
        <Sidebar aria-label="Main menu">
          <a href="#home" aria-label="Home"><GrafanaMark size={42} id="mark-side" /></a>
          <SideGroup>
            {sideLinks.map((l) => (
              <SideLink key={l.name} href={`#${l.name}`} aria-label={l.label}><Icon name={l.name} size={36} /></SideLink>
            ))}
          </SideGroup>
          <SideGroup $end>
            <SideLink href="#profile" aria-label="Profile">
              <svg width="42" height="42" viewBox="0 0 42 42">
                <clipPath id="avatar-clip"><circle cx="21" cy="21" r="21" /></clipPath>
                <g clipPath="url(#avatar-clip)">
                  <path d="M0 0h42v42H0z" fill="#c5c5c5" />
                  <ellipse cx="21" cy="17" rx="9.500" ry="11" fill="#fff" />
                  <path d="M3 42c1-9 7-11 12-14h12c5 3 11 5 12 14z" fill="#fff" />
                </g>
              </svg>
            </SideLink>
            <SideLink href="#help" aria-label="Help"><Icon name="help" size={36} /></SideLink>
          </SideGroup>
        </Sidebar>

        <Main>
          <Toolbar>
            <Title>
              <Icon name="apps" />
              <Crumb href="#general">General</Crumb>
              <span>/</span>
              <Crumb href="#container">Container</Crumb>
              <StarButton aria-label="Unmark as favorite"><Icon name="star" /></StarButton>
              <TitleButton aria-label="Share dashboard"><Icon name="share" /></TitleButton>
            </Title>
            <ToolButton aria-label="Add panel">
              <svg width="37" height="22" viewBox="0 0 37 22">
                <defs>
                  <linearGradient id="add-panel" x1="0" y1="0" x2="0" y2="1">
                    <stop offset="0" stopColor="#f2761f" />
                    <stop offset="1" stopColor="#fbc216" />
                  </linearGradient>
                </defs>
                <path d="M0 8h5v13H0zM6.500 4h5v17h-5zM13 10h5v11h-5zM19.500 1h5.500v20h-5.500z" fill="#8e8e99" />
                <path d="M27.500 3h6v4.500H37v6h-3.500V18h-6v-4.500H22v-6h5.500z" fill="#181b1f" />
                <path d="M28.500 4.500h4V9H37v3.500h-4.500V17h-4v-4.500H24V9h4.500z" fill="url(#add-panel)" />
              </svg>
            </ToolButton>
            <ToolButton aria-label="Save dashboard"><Icon name="save" /></ToolButton>
            <ToolButton aria-label="Dashboard settings"><Icon name="cog" /></ToolButton>
            <Group>
              <ToolButton><Icon name="clock" /><RangeText>Last 15 minutes</RangeText><Icon name="down" size={24} /></ToolButton>
              <ToolButton aria-label="Zoom out"><Icon name="zoomOut" /></ToolButton>
            </Group>
            <Group>
              <ToolButton aria-label="Refresh"><Icon name="sync" /></ToolButton>
              <SelectBox $tone="tool">
                <select aria-label="Refresh interval"><option>1m</option></select>
                <Icon name="down" size={24} />
              </SelectBox>
            </Group>
            <ToolButton aria-label="Cycle view mode"><Icon name="monitor" /></ToolButton>
          </Toolbar>

          <Filters>
            <Filter>
              <FilterLabel htmlFor="instances">Instances</FilterLabel>
              <SelectBox>
                <select id="instances"><option>All</option></select>
                <Icon name="down" size={24} />
              </SelectBox>
            </Filter>
            <Filter>
              <FilterLabel htmlFor="containers">Containers</FilterLabel>
              <SelectBox>
                <select id="containers"><option>All</option></select>
                <Icon name="down" size={24} />
              </SelectBox>
            </Filter>
          </Filters>

          <Dashboard>
            <ChartPanel title="CPU %" ticks={['10%', '8%', '6%', '4%', '2%', '0%']} series={cpuSeries} height={483} range={[261, 1709]} points={61} />
            <ChartPanel title="Memory usage" ticks={['2.33 GiB', '1.86 GiB', '1.40 GiB', '954 MiB', '477 MiB', '0 B']} series={memorySeries} height={483} range={[213, 1396]} points={31} />
            <Panel $rows={2}>
              <PanelTitle>Status</PanelTitle>
              <StatusTable />
            </Panel>
            <ChartPanel info title="Network I/O (+transmit, -receive)" ticks={['200 kb/s', '100 kb/s', '0 b/s', '-100 kb/s', '-200 kb/s']} series={networkSeries} height={426} range={[252, 1530]} points={31} />
            <ChartPanel info title="Disk I/O (+write, -read)" ticks={['25 kB/s', '0 B/s', '-25 kB/s', '-50 kB/s', '-75 kB/s', '-100 kB/s', '-125 kB/s']} series={diskSeries} height={426} range={[252, 1530]} points={31} />
          </Dashboard>
        </Main>
      </Shell>
      <Meter><MeterScale /></Meter>
    </Window>
  );
}
